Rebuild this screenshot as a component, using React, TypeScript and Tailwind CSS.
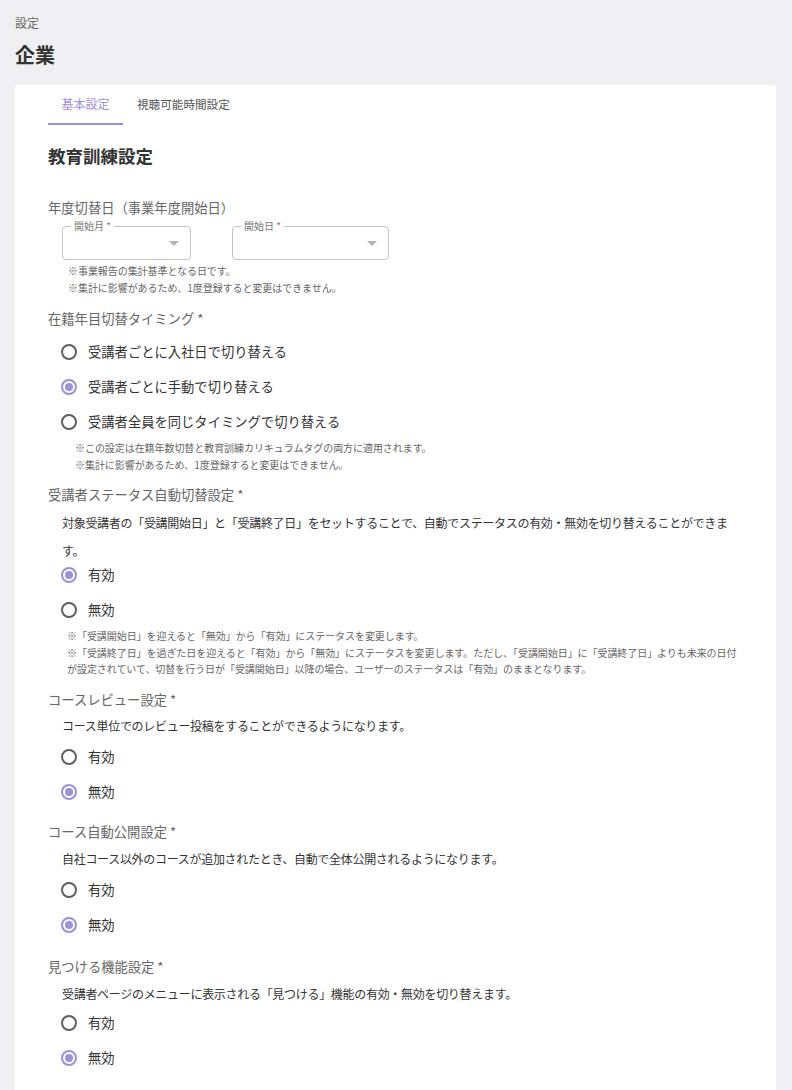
import React from 'react';

const Radio: React.FC<{ label: string; checked?: boolean }> = ({ label, checked }) => (
  <label className='flex items-center h-[35px] pl-[13px]'>
    <span className={`flex items-center justify-center w-[16px] h-[16px] rounded-full border-2 ${checked ? 'border-[#9d8fdc]' : 'border-[#5f5f5f]'}`}>
      {checked && <span className='w-[8px] h-[8px] rounded-full bg-[#9d8fdc]' />}
    </span>
    <span className='ml-[11px] text-[13.3px] text-[#333]'>{label}</span>
  </label>
);

const Select: React.FC<{ label: string; width: string }> = ({ label, width }) => (
  <div className={`relative h-[34px] border border-[#c4c4c4] rounded ${width}`}>
    <span className='absolute -top-[8px] left-[8px] px-[3px] bg-white text-[10px] leading-[14px] text-[#777]'>{label}</span>
    <span className='absolute right-[11px] top-[14px] w-0 h-0 border-l-[5px] border-r-[5px] border-t-[5px] border-l-transparent border-r-transparent border-t-[#b3b3b3]' />
  </div>
);

const Title: React.FC<{ children: React.ReactNode }> = ({ children }) => (
  <h3 className='text-[13.3px] leading-[20px] text-[#666]'>{children}</h3>
);

const Desc: React.FC<{ children: React.ReactNode }> = ({ children }) => (
  <p className='pl-[14px] text-[12px] tracking-[-0.3px] leading-[28px] text-[#333]'>{children}</p>
);

const Note: React.FC<{ children: React.ReactNode }> = ({ children }) => (
  <p className='text-[10px] leading-[16.5px] text-[#666] tracking-[-0.06px]'>{children}</p>
);

const App: React.FC = () => {
  return (
    <main className='min-h-screen bg-[#f0f0f2] font-["Noto_Sans_CJK_JP",sans-serif] overflow-hidden h-[1090px]'>
      <div className='pl-[15px] pt-[14px]'>
        <p className='text-[12px] leading-[18px] text-[#666]'>設定</p>
        <h1 className='mt-[10px] text-[20px] leading-[26px] font-bold text-[#333]'>企業</h1>
      </div>

      <section className='mt-[17px] ml-[15px] w-[761px] bg-white rounded-[4px] px-[33px] pb-10'>
        {/* Tabs */}
        <div className='flex h-[40px]'>
          <div className='w-[75px] flex items-center justify-center text-[12px] text-[#9d8fdc] border-b-2 border-[#9d8fdc]'>基本設定</div>
          <div className='ml-[14px] flex items-center text-[11.6px] text-[#555]'>視聴可能時間設定</div>
        </div>

        <h2 className='mt-[18px] text-[17.5px] leading-[26px] font-bold text-[#333]'>教育訓練設定</h2>

        {/* 年度切替日 */}
        <div className='mt-[29px]'>
          <Title>年度切替日（事業年度開始日）</Title>
          <div className='flex gap-[41px] pl-[14px] mt-[8px]'>
            <Select label='開始月 *' width='w-[129px]' />
            <Select label='開始日 *' width='w-[157px]' />
          </div>
          <div className='pl-[20px] mt-[3px]'>
            <Note>※事業報告の集計基準となる日です。</Note>
            <Note>※集計に影響があるため、1度登録すると変更はできません。</Note>
          </div>
        </div>

        {/* 在籍年目切替タイミング */}
        <div className='mt-[13px]'>
          <Title>在籍年目切替タイミング *</Title>
          <div className='mt-[5px]'>
            <Radio label='受講者ごとに入社日で切り替える' />
            <Radio label='受講者ごとに手動で切り替える' checked />
            <Radio label='受講者全員を同じタイミングで切り替える' />
          </div>
          <div className='pl-[27px] mt-[1px]'>
            <Note>※この設定は在籍年数切替と教育訓練カリキュラムタグの両方に適用されます。</Note>
            <Note>※集計に影響があるため、1度登録すると変更はできません。</Note>
          </div>
        </div>

        {/* 受講者ステータス自動切替設定 */}
        <div className='mt-[12px]'>
          <Title>受講者ステータス自動切替設定 *</Title>
          <div className='mt-[4px]'>
            <Desc>対象受講者の「受講開始日」と「受講終了日」をセットすることで、自動でステータスの有効・無効を切り替えることができます。</Desc>
          </div>
          <div className='-mt-[8px]'>
            <Radio label='有効' checked />
            <Radio label='無効' />
          </div>
          <div className='pl-[19px] mt-[1px]'>
            <Note>※「受講開始日」を迎えると「無効」から「有効」にステータスを変更します。</Note>
            <Note>※「受講終了日」を過ぎた日を迎えると「有効」から「無効」にステータスを変更します。ただし、「受講開始日」に「受講終了日」よりも未来の日付が設定されていて、切替を行う日が「受講開始日」以降の場合、ユーザーのステータスは「有効」のままとなります。</Note>
          </div>
        </div>

        {/* コースレビュー設定 */}
        <div className='mt-[12px]'>
          <Title>コースレビュー設定 *</Title>
          <div className='mt-[2px]'>
            <Desc>コース単位でのレビュー投稿をすることができるようになります。</Desc>
          </div>
          <div className='mt-[0px]'>
            <Radio label='有効' />
            <Radio label='無効' checked />
          </div>
        </div>

        {/* コース自動公開設定 */}
        <div className='mt-[12px]'>
          <Title>コース自動公開設定 *</Title>
          <div className='mt-[3px]'>
            <Desc>自社コース以外のコースが追加されたとき、自動で全体公開されるようになります。</Desc>
          </div>
          <div className='mt-[0px]'>
            <Radio label='有効' />
            <Radio label='無効' checked />
          </div>
        </div>

        {/* 見つける機能設定 */}
        <div className='mt-[14px]'>
          <Title>見つける機能設定 *</Title>
          <div className='mt-[3px]'>
            <Desc>受講者ページのメニューに表示される「見つける」機能の有効・無効を切り替えます。</Desc>
          </div>
          <div className='-mt-[2px]'>
            <Radio label='有効' />
            <Radio label='無効' checked />
          </div>
        </div>
      </section>
    </main>
  );
};

export default App;
